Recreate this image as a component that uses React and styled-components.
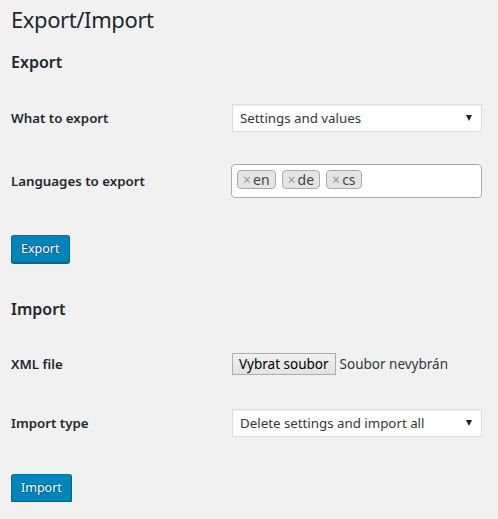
import React from 'react';
import styled, { createGlobalStyle } from 'styled-components';

const GlobalStyle = createGlobalStyle`
    html, body {
        margin: 0;
        padding: 0;
        background: #f1f1f1;
    }
    body {
        font-family: "Segoe UI", "Noto Sans", sans-serif;
        color: #23282d;
        font-size: 13px;
    }
`;

export default function App() {
    return (
        <>
            <GlobalStyle />
            <Wrap>
                <Title>Export/Import</Title>

                <SectionTitle>Export</SectionTitle>
                <Row height={59}>
                    <Label>What to export</Label>
                    <Select value="Settings and values" />
                </Row>
                <Row height={67}>
                    <Label>Languages to export</Label>
                    <MultiSelect>
                        {['en', 'de', 'cs'].map(lang => (
                            <Tag key={lang}>
                                <TagRemove>×</TagRemove>
                                {lang}
                            </Tag>
                        ))}
                    </MultiSelect>
                </Row>
                <PrimaryButton>Export</PrimaryButton>

                <SectionTitle top={35}>Import</SectionTitle>
                <Row height={59} top={14}>
                    <Label>XML file</Label>
                    <FileField>
                        <FileButton>Vybrat soubor</FileButton>
                        <FileName>Soubor nevybrán</FileName>
                    </FileField>
                </Row>
                <Row height={60}>
                    <Label>Import type</Label>
                    <Select value="Delete settings and import all" />
                </Row>
                <PrimaryButton>Import</PrimaryButton>
            </Wrap>
        </>
    );
}

function Select({ value }) {
    return (
        <SelectBox>
            <span>{value}</span>
            <Arrow />
        </SelectBox>
    );
}

const Wrap = styled.div`
    padding: 5px 0 0 11px;
`;

const Title = styled.h1`
    margin: 0;
    font-size: 22px;
    font-weight: 400;
    letter-spacing: -0.4px;
    line-height: 29px;
    color: #23282d;
`;

const SectionTitle = styled.h2`
    margin: ${props => props.top || 17}px 0 0;
    font-size: 16px;
    font-weight: 600;
    line-height: 22px;
    color: #23282d;
`;

const Row = styled.div`
    display: grid;
    grid-template-columns: 221px 250px;
    align-items: center;
    height: ${props => props.height}px;
    margin-top: ${props => props.top || 0}px;

    &:first-of-type {
        margin-top: 15px;
    }
`;

const Label = styled.div`
    font-size: 13.3px;
    font-weight: 600;
    color: #23282d;
`;

const SelectBox = styled.div`
    box-sizing: border-box;
    height: 28px;
    width: 250px;
    display: flex;
    align-items: center;
    justify-content: space-between;
    padding: 0 9px 0 7px;
    background: #fff;
    border: 1px solid #ddd;
    box-shadow: inset 0 1px 2px rgba(0, 0, 0, 0.07);
    font-size: 13.3px;
    color: #32373c;
`;

const Arrow = styled.span`
    width: 0;
    height: 0;
    border-left: 3.5px solid transparent;
    border-right: 3.5px solid transparent;
    border-top: 6px solid #222;
`;

const MultiSelect = styled.div`
    box-sizing: border-box;
    margin-left: -1px;
    width: 251px;
    height: 34px;
    display: flex;
    align-items: flex-start;
    gap: 6px;
    padding: 5px 5px 0;
    background: #fff;
    border: 1px solid #aaa;
    border-radius: 4px;
`;

const Tag = styled.span`
    box-sizing: border-box;
    height: 19px;
    display: flex;
    align-items: center;
    padding: 0 5px;
    background: #e4e4e4;
    border: 1px solid #aaa;
    border-radius: 4px;
    font-size: 14px;
    color: #444;
`;

const TagRemove = styled.span`
    color: #999;
    font-size: 14px;
    margin-right: 2px;
`;

const PrimaryButton = styled.button`
    display: block;
    box-sizing: border-box;
    margin-top: 21px;
    height: 28px;
    padding: 0 9px 1px;
    background: #0085ba;
    border: 1px solid;
    border-color: #0073aa #006799 #006799;
    border-radius: 3px;
    box-shadow: 0 1px 0 #006799;
    text-shadow: 0 -1px 1px #006799, 1px 0 1px #006799, 0 1px 1px #006799, -1px 0 1px #006799;
    color: #fff;
    font-family: "Segoe UI", "Noto Sans", sans-serif;
    font-size: 12.5px;
    line-height: 26px;
`;

const FileField = styled.div`
    display: flex;
    align-items: center;
    gap: 4px;
`;

const FileButton = styled.button`
    box-sizing: border-box;
    height: 22px;
    padding: 0 6px;
    background: linear-gradient(#f0f0f0, #e3e3e3);
    border: 1px solid #adadad;
    border-radius: 0;
    color: #000;
    font-family: "Segoe UI", "Noto Sans", sans-serif;
    font-size: 13.5px;
`;

const FileName = styled.span`
    font-size: 13.5px;
    color: #32373c;
`;
